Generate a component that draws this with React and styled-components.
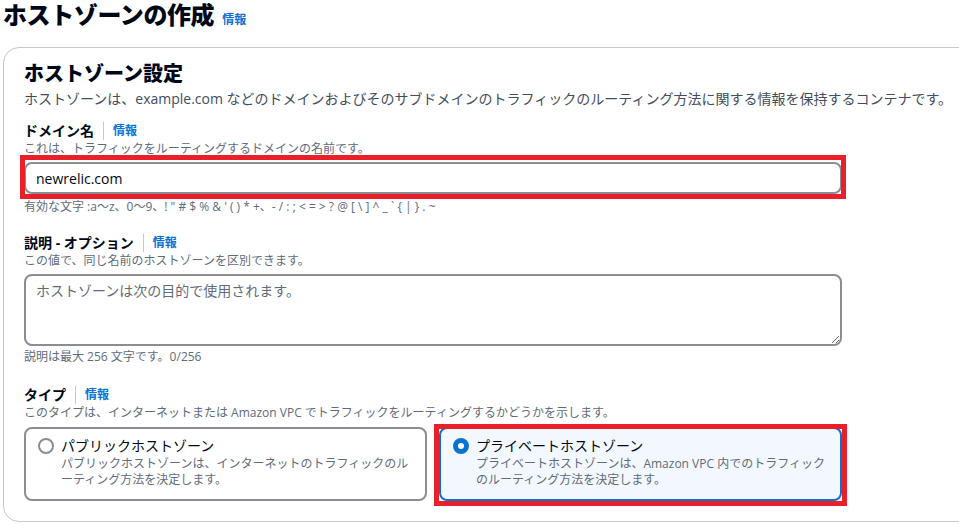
import React from "react";
import styled, { createGlobalStyle } from "styled-components";

const GlobalStyle = createGlobalStyle`
  html, body {
    margin: 0;
    padding: 0;
    background: #ffffff;
    overflow: hidden;
  }
  body {
    font-family: "Open Sans", "Noto Sans CJK JP", sans-serif;
    color: #000716;
  }
  * {
    box-sizing: border-box;
  }
`;

const Page = styled.div`
  width: 959px;
  height: 530px;
  padding-left: 3px;
  overflow: hidden;
`;

const TitleRow = styled.div`
  display: flex;
  align-items: baseline;
  h1 {
    margin: 0;
    font-size: 24px;
    line-height: 30px;
    font-weight: 800;
    letter-spacing: -0.4px;
  }
`;

const Info = styled.a`
  color: #0972d3;
  font-size: 12px;
  font-weight: 700;
  text-decoration: none;
  margin-left: ${(p) => (p.$plain ? "8px" : "0")};
`;

const Panel = styled.section`
  width: 1000px;
  margin-top: 17px;
  border: 1px solid #c6c6cd;
  border-radius: 16px;
  padding: 14px 20px 20px;
`;

const PanelHeader = styled.header`
  h2 {
    margin: 0;
    font-size: 20px;
    line-height: 24px;
    font-weight: 800;
  }
  p {
    margin: 3px 0 0;
    font-size: 14px;
    line-height: 20px;
    color: #414d5c;
  }
`;

const Field = styled.div`
  width: 818px;
  margin-top: ${(p) => p.$top}px;
`;

const LabelRow = styled.div`
  display: flex;
  align-items: center;
  height: 20px;
  label {
    font-size: 14px;
    font-weight: 700;
    line-height: 20px;
  }
  ${Info} {
    border-left: 1px solid #c6c6cd;
    margin-left: 9px;
    padding-left: 9px;
    line-height: 18px;
  }
`;

const Hint = styled.div`
  font-size: 12px;
  line-height: 16px;
  color: #5f6b7a;
  margin-top: ${(p) => p.$top || 0}px;
`;

const Marked = styled.div`
  position: relative;
  margin-top: ${(p) => p.$mt || 0}px;
  &::after {
    content: "";
    position: absolute;
    top: ${(p) => p.$t}px;
    bottom: ${(p) => p.$b}px;
    left: ${(p) => p.$l}px;
    right: ${(p) => p.$r}px;
    border: 5px solid #e9202a;
    pointer-events: none;
  }
`;

const TextInput = styled.input`
  display: block;
  width: 100%;
  height: 32px;
  border: 2px solid #8c8c94;
  border-radius: 8px;
  padding: 0 10px;
  font-family: inherit;
  font-size: 14px;
  color: #000716;
  outline: none;
`;

const TextArea = styled.textarea`
  display: block;
  width: 100%;
  height: 72px;
  margin-top: 5px;
  border: 2px solid #8c8c94;
  border-radius: 8px;
  padding: 4px 10px;
  font-family: inherit;
  font-size: 14px;
  line-height: 22px;
  color: #000716;
  resize: vertical;
  outline: none;
  &::placeholder {
    color: #5f6b7a;
  }
`;

const Tiles = styled.div`
  display: grid;
  grid-template-columns: 1fr 1fr;
  gap: 12px;
  margin-top: 6px;
`;

const Tile = styled.div`
  display: flex;
  gap: 7px;
  height: 74px;
  padding: 7px 12px 11px;
  border: 2px solid ${(p) => (p.$checked ? "#0972d3" : "#8c8c94")};
  border-radius: 8px;
  background: ${(p) => (p.$checked ? "#f2f8fd" : "#ffffff")};
`;

const Radio = styled.span`
  flex: none;
  width: 16px;
  height: 16px;
  margin-top: 2px;
  border-radius: 50%;
  background: #ffffff;
  border: ${(p) => (p.$checked ? "5px solid #0972d3" : "2px solid #8c8c94")};
`;

const TileTitle = styled.div`
  font-size: 14px;
  line-height: 20px;
  font-weight: 400;
  color: #000716;
`;

const TileDesc = styled.div`
  font-size: 12px;
  line-height: 16px;
  color: #5f6b7a;
`;

const TypeTile = ({ checked, title, desc }) => (
  <Tile $checked={checked}>
    <Radio $checked={checked} />
    <div>
      <TileTitle>{title}</TileTitle>
      <TileDesc>{desc}</TileDesc>
    </div>
  </Tile>
);

export default function App() {
  return (
    <Page>
      <GlobalStyle />
      <TitleRow>
        <h1>ホストゾーンの作成</h1>
        <Info href="#" $plain>情報</Info>
      </TitleRow>
      <Panel>
        <PanelHeader>
          <h2>ホストゾーン設定</h2>
          <p>
            ホストゾーンは、example.com
            などのドメインおよびそのサブドメインのトラフィックのルーティング方法に関する情報を保持するコンテナです。
          </p>
        </PanelHeader>

        <Field $top={12}>
          <LabelRow>
            <label>ドメイン名</label>
            <Info href="#">情報</Info>
          </LabelRow>
          <Hint>これは、トラフィックをルーティングするドメインの名前です。</Hint>
          <Marked $mt={5} $t={-7} $b={-5} $l={-4} $r={-4}>
            <TextInput defaultValue="newrelic.com" />
          </Marked>
          <Hint $top={5}>
            有効な文字 :a〜z、0〜9、! " # $ % &amp; ' ( ) * +、- / : ; &lt; = &gt; ? @ [ \ ] ^ _ ` {"{"} | {"}"} . ~
          </Hint>
        </Field>

        <Field $top={18}>
          <LabelRow>
            <label>説明 - オプション</label>
            <Info href="#">情報</Info>
          </LabelRow>
          <Hint>この値で、同じ名前のホストゾーンを区別できます。</Hint>
          <TextArea placeholder="ホストゾーンは次の目的で使用されます。" />
          <Hint $top={3}>説明は最大 256 文字です。0/256</Hint>
        </Field>

        <Field $top={20}>
          <LabelRow>
            <label>タイプ</label>
            <Info href="#">情報</Info>
          </LabelRow>
          <Hint>
            このタイプは、インターネットまたは Amazon VPC でトラフィックをルーティングするかどうかを示します。
          </Hint>
          <Tiles>
            <TypeTile
              title="パブリックホストゾーン"
              desc="パブリックホストゾーンは、インターネットのトラフィックのルーティング方法を決定します。"
            />
            <Marked $t={-3} $b={-5} $l={-5} $r={-5}>
              <TypeTile
                checked
                title="プライベートホストゾーン"
                desc="プライベートホストゾーンは、Amazon VPC 内でのトラフィックのルーティング方法を決定します。"
              />
            </Marked>
          </Tiles>
        </Field>
      </Panel>
    </Page>
  );
}
